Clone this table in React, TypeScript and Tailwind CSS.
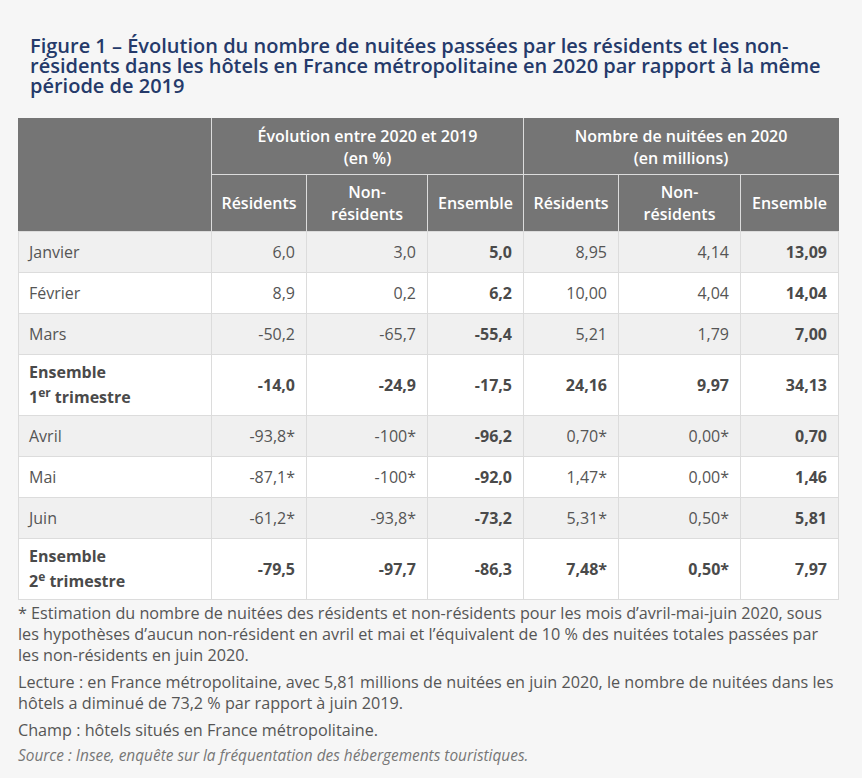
import React from "react";

type Row = {
  label: React.ReactNode;
  values: string[];
  total?: boolean;
};

const rows: Row[] = [
  { label: "Janvier", values: ["6,0", "3,0", "5,0", "8,95", "4,14", "13,09"] },
  { label: "Février", values: ["8,9", "0,2", "6,2", "10,00", "4,04", "14,04"] },
  { label: "Mars", values: ["-50,2", "-65,7", "-55,4", "5,21", "1,79", "7,00"] },
  {
    label: (
      <>
        Ensemble
        <br />1<sup className="text-[12px]">er</sup> trimestre
      </>
    ),
    values: ["-14,0", "-24,9", "-17,5", "24,16", "9,97", "34,13"],
    total: true,
  },
  { label: "Avril", values: ["-93,8*", "-100*", "-96,2", "0,70*", "0,00*", "0,70"] },
  { label: "Mai", values: ["-87,1*", "-100*", "-92,0", "1,47*", "0,00*", "1,46"] },
  { label: "Juin", values: ["-61,2*", "-93,8*", "-73,2", "5,31*", "0,50*", "5,81"] },
  {
    label: (
      <>
        Ensemble
        <br />2<sup className="text-[12px]">e</sup> trimestre
      </>
    ),
    values: ["-79,5", "-97,7", "-86,3", "7,48*", "0,50*", "7,97"],
    total: true,
  },
];

// columns 3 and 6 (Ensemble) are always bold
const boldCols = [2, 5];

export default function App() {
  return (
    <div className="min-h-[778px] bg-[#f6f6f6] px-[18px] pt-[36px] font-['Open_Sans',sans-serif]">
      <h2 className="pl-[12px] pr-[10px] text-[20px] font-semibold leading-[20px] text-[#253a6a]">
        Figure 1 – Évolution du nombre de nuitées passées par les résidents et les non-résidents dans les hôtels en France métropolitaine en 2020 par rapport à la même période de 2019
      </h2>

      <table className="mt-[22px] w-[820px] table-fixed border-collapse text-[16px] text-[#555]">
        <colgroup>
          <col className="w-[193px]" />
          <col className="w-[95px]" />
          <col className="w-[121px]" />
          <col className="w-[96px]" />
          <col className="w-[95px]" />
          <col className="w-[122px]" />
          <col className="w-[98px]" />
        </colgroup>
        <thead className="bg-[#757575] leading-[22px] text-white">
          <tr className="h-[56px]">
            <th rowSpan={2} className="border border-[#dcdcdc] border-t-[#757575] border-l-[#757575]" />
            <th colSpan={3} className="border border-[#dcdcdc] border-t-[#757575] px-[8px] font-semibold">
              Évolution entre 2020 et 2019
              <br />
              (en %)
            </th>
            <th colSpan={3} className="border border-[#dcdcdc] border-t-[#757575] border-r-[#757575] px-[8px] font-semibold">
              Nombre de nuitées en 2020
              <br />
              (en millions)
            </th>
          </tr>
          <tr className="h-[57px]">
            <th className="border border-[#dcdcdc] px-[4px] font-semibold">Résidents</th>
            <th className="border border-[#dcdcdc] px-[4px] font-semibold">
              Non-
              <br />
              résidents
            </th>
            <th className="border border-[#dcdcdc] px-[4px] font-semibold">Ensemble</th>
            <th className="border border-[#dcdcdc] px-[4px] font-semibold">Résidents</th>
            <th className="border border-[#dcdcdc] px-[4px] font-semibold">
              Non-
              <br />
              résidents
            </th>
            <th className="border border-[#dcdcdc] border-r-[#757575] px-[4px] font-semibold">Ensemble</th>
          </tr>
        </thead>
        <tbody>
          {rows.map((row, i) => (
            <tr
              key={i}
              className={
                (i % 2 === 0 ? "bg-[#f0f0f0] " : "bg-white ") +
                (row.total ? "h-[61px] leading-[25px]" : "h-[41px] leading-[22px]")
              }
            >
              <td
                className={
                  "border border-[#dcdcdc] px-[10px] " +
                  (row.total ? "font-bold text-[#4a4a4a]" : "")
                }
              >
                {row.label}
              </td>
              {row.values.map((v, j) => (
                <td
                  key={j}
                  className={
                    "border border-[#dcdcdc] px-[11px] text-right " +
                    (row.total || boldCols.includes(j) ? "font-bold text-[#4a4a4a]" : "")
                  }
                >
                  {v}
                </td>
              ))}
            </tr>
          ))}
        </tbody>
      </table>

      <div className="mt-[3px] pr-[5px] text-[16.2px] leading-[21px] text-[#555]">
        <p>
          * Estimation du nombre de nuitées des résidents et non-résidents pour les mois d’avril-mai-juin 2020, sous les hypothèses d’aucun non-résident en avril et mai et l’équivalent de 10 % des nuitées totales passées par les non-résidents en juin 2020.
        </p>
        <p className="mt-[6px]">
          Lecture : en France métropolitaine, avec 5,81 millions de nuitées en juin 2020, le nombre de nuitées dans les hôtels a diminué de 73,2 % par rapport à juin 2019.
        </p>
        <p className="mt-[6px]">Champ : hôtels situés en France métropolitaine.</p>
        <p className="mt-[4px] text-[15.4px] italic text-[#777]">
          Source : Insee, enquête sur la fréquentation des hébergements touristiques.
        </p>
      </div>
    </div>
  );
}
